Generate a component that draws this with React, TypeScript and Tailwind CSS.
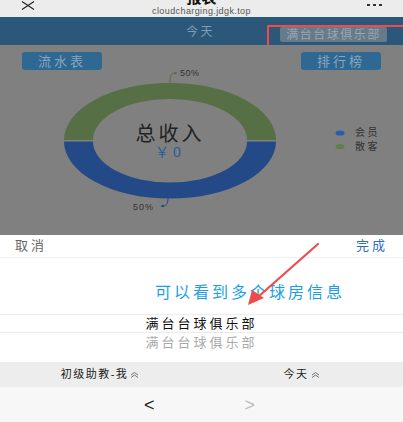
import React from 'react';

const font = { fontFamily: '"Liberation Sans", "Noto Sans CJK SC", sans-serif' };

function DoubleUp() {
  return (
    <svg width="9" height="7" viewBox="0 0 9 7" className="inline-block ml-[2px]">
      <path d="M1 4 L4.5 1.5 L8 4 M1 6.5 L4.5 4 L8 6.5" fill="none" stroke="#555" strokeWidth="0.8" />
    </svg>
  );
}

function Donut() {
  return (
    <svg width="403" height="190" viewBox="0 0 403 190" className="absolute left-0 top-0">
      {/* chart centre at (170, 95) in this box */}
      <path d="M64 95 A106 57 0 0 1 276 95 L247 95 A77 41 0 0 0 93 95 Z" fill="#566f45" />
      <path d="M64 96.5 A106 57 0 0 0 276 96.5 L247 96.5 A77 41 0 0 1 93 96.5 Z" fill="#234a86" />
      <path d="M170 38 C170 32 171 28 175 28" fill="none" stroke="#566f45" strokeWidth="1" />
      <circle cx="175.5" cy="28" r="1.3" fill="#566f45" />
      <path d="M168 152 C168 158 167 161 163 161" fill="none" stroke="#234a86" strokeWidth="1" />
      <circle cx="162.5" cy="161" r="1.3" fill="#234a86" />
      <ellipse cx="340" cy="88" rx="4.5" ry="2.6" fill="#2c5bb0" />
      <ellipse cx="340" cy="101.5" rx="4.5" ry="2.6" fill="#5f7f4c" />
    </svg>
  );
}

export default function App() {
  return (
    <div className="w-[403px] h-[422px] overflow-hidden flex flex-col bg-white" style={font}>
      {/* WeChat top bar */}
      <div className="relative h-[17px] bg-[#ececec] flex items-start justify-between px-[20px] overflow-hidden">
        <svg width="16" height="9" viewBox="0 0 16 9" className="mt-[1px]">
          <path d="M2 0.5 L14 8.5 M14 0.5 L2 8.5" stroke="#222" strokeWidth="1.1" />
        </svg>
        <div className="flex flex-col items-center -mt-[11px]">
          <span className="text-[15px] leading-[18px] text-[#111] font-bold">报表</span>
          <span className="text-[9px] leading-[9px] text-[#555] tracking-[0.4px]">cloudcharging.jdgk.top</span>
        </div>
        <div className="flex gap-[3px] mt-[4px] mr-[1px]">
          <span className="w-[3px] h-[2px] bg-[#333]" />
          <span className="w-[3px] h-[2px] bg-[#333]" />
          <span className="w-[3px] h-[2px] bg-[#333]" />
        </div>
      </div>

      {/* dimmed blue header */}
      <div className="relative h-[28px] bg-[#2b5878] flex items-center">
        <span className="absolute left-[186px] top-[6px] text-[12px] tracking-[2.5px] text-[#7f9cb2]">今天</span>
        <div className="absolute left-[280px] top-[10px] w-[107px] h-[15px] bg-[#657a8a] rounded-[2px] flex items-center justify-center">
          <span className="text-[12px] tracking-[1.5px] text-[#9aa7b1] leading-none">满台台球俱乐部</span>
        </div>
        <div className="absolute left-[267px] top-[8px] w-[140px] h-[22px] border-2 border-[#f04a4e] rounded-[1px]" />
      </div>

      {/* dimmed chart area */}
      <div className="relative h-[190px] bg-[#808080]">
        <Donut />
        <div className="relative flex justify-between px-[22px] pt-[7px]">
          <div className="w-[80px] h-[18px] bg-[#2f6892] rounded-[3px] flex items-center justify-center">
            <span className="text-[13px] tracking-[3px] text-[#8aa6bb] leading-none">流水表</span>
          </div>
          <div className="w-[80px] h-[18px] bg-[#2f6892] rounded-[3px] flex items-center justify-center">
            <span className="text-[13px] tracking-[3px] text-[#8aa6bb] leading-none">排行榜</span>
          </div>
        </div>
        <span className="absolute left-[180px] top-[22px] text-[9px] tracking-[0.5px] text-[#333]">50%</span>
        <span className="absolute left-[133px] top-[156px] text-[9px] tracking-[1px] text-[#333]">50%</span>
        <div className="absolute left-[100px] top-[78px] w-[140px] flex flex-col items-center">
          <span className="text-[20px] leading-[22px] tracking-[3px] text-[#222]">总收入</span>
          <span className="text-[14px] leading-[16px] tracking-[4px] text-[#2c5c9c] -mt-[1px]">￥0</span>
        </div>
        <div className="absolute left-[355px] top-[82px] flex flex-col gap-[3px]">
          <span className="text-[10px] leading-[11px] tracking-[2.5px] text-[#333]">会员</span>
          <span className="text-[10px] leading-[11px] tracking-[2.5px] text-[#333]">散客</span>
        </div>
      </div>

      {/* picker sheet */}
      <div className="relative flex-1 flex flex-col bg-white">
        <div className="h-[23px] flex items-center justify-between px-[15px] border-b border-[#efefef]">
          <span className="text-[13px] tracking-[3px] text-[#666]">取消</span>
          <span className="text-[13px] tracking-[3px] text-[#2f6dc2]">完成</span>
        </div>
        <div className="h-[56px] flex items-center justify-end pr-[58px] pt-[14px]">
          <span className="text-[16px] tracking-[3px] text-[#1c9fe4]">可以看到多个球房信息</span>
        </div>
        <div className="h-[19px] flex items-center justify-center border-y border-[#ececec]">
          <span className="text-[13px] tracking-[3px] text-[#111] leading-none">满台台球俱乐部</span>
        </div>
        <div className="h-[19px] flex items-center justify-center">
          <span className="text-[13px] tracking-[3px] text-[#aaa] leading-none">满台台球俱乐部</span>
        </div>
        <div className="h-[10px]" />
        <div className="h-[25px] bg-[#ededed] flex items-center">
          <div className="w-[200px] flex items-center justify-center">
            <span className="text-[11px] tracking-[1.5px] text-[#222]">初级助教-我</span>
            <DoubleUp />
          </div>
          <div className="w-[203px] flex items-center justify-center">
            <span className="text-[11px] tracking-[1.5px] text-[#222]">今天</span>
            <DoubleUp />
          </div>
        </div>
        <div className="flex-1 bg-[#f7f7f7] flex items-center">
          <span className="ml-[144px] text-[18px] text-[#222] leading-none">&lt;</span>
          <span className="ml-[90px] text-[18px] text-[#bbb] leading-none">&gt;</span>
        </div>

        {/* red annotation arrow */}
        <svg width="403" height="187" viewBox="0 0 403 187" className="absolute left-0 top-0 pointer-events-none">
          <path d="M318 9 L258 62" stroke="#ee4b4b" strokeWidth="2.2" strokeLinecap="round" />
          <path d="M248 70 L252 55 L264 63 Z" fill="#ee4b4b" />
        </svg>
      </div>
    </div>
  );
}
